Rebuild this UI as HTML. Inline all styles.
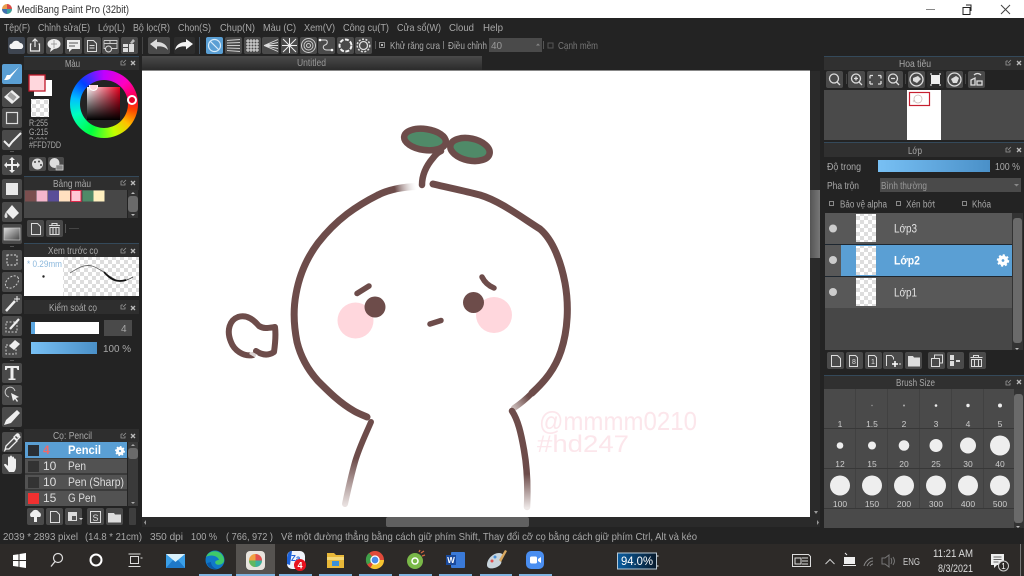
<!DOCTYPE html>
<html><head><meta charset="utf-8"><title>MediBang Paint Pro</title>
<style>
html,body{margin:0;padding:0;width:1024px;height:576px;overflow:hidden;background:#232323}
svg{position:absolute;left:0;top:0;font-family:"Liberation Sans",sans-serif}
text{fill:#a8a8a8;font-size:10px}
.w{position:absolute;left:70px;top:70px;width:68px;height:68px;border-radius:50%;background:conic-gradient(from 0deg,#c000ff 0deg,#ff00c0 45deg,#ff0040 80deg,#ff4000 100deg,#ffc000 130deg,#c0ff00 160deg,#00ff40 205deg,#00ffc0 250deg,#00c0ff 280deg,#0040ff 315deg,#c000ff 360deg)}
.wi{position:absolute;left:80px;top:80px;width:48px;height:48px;border-radius:50%;background:#232323}
.sq{position:absolute;left:87px;top:87px;width:33px;height:33px;background:linear-gradient(to bottom,transparent,#000),linear-gradient(to right,#fff,#e8001f)}
.h{position:absolute;left:127px;top:95px;width:6px;height:6px;border-radius:50%;background:#e8002a;border:2px solid #fff}
.p{position:absolute;left:89px;top:85px;width:7px;height:5px;border-radius:0 0 5px 5px;background:#ffd7dd;border:1px solid #fff;border-top:0}
</style></head><body>
<svg width="1024" height="576" viewBox="0 0 1024 576" xmlns="http://www.w3.org/2000/svg">
<defs>
<pattern id="ck" width="8" height="8" patternUnits="userSpaceOnUse"><rect width="8" height="8" fill="#fff"/><rect width="4" height="4" fill="#ddd"/><rect x="4" y="4" width="4" height="4" fill="#ddd"/></pattern>
<linearGradient id="tab" x1="0" y1="0" x2="0" y2="1"><stop offset="0" stop-color="#4a4a4a"/><stop offset="1" stop-color="#2b2b2b"/></linearGradient>
<linearGradient id="blue" x1="0" y1="0" x2="1" y2="0"><stop offset="0" stop-color="#78c0f4"/><stop offset="1" stop-color="#4a90c8"/></linearGradient>
<linearGradient id="gr" x1="0" y1="0" x2="1" y2="1"><stop offset="0" stop-color="#ddd"/><stop offset="1" stop-color="#444"/></linearGradient>
<linearGradient id="nn" x1="0" y1="0" x2="1" y2="0"><stop offset="0" stop-color="#0a5da0"/><stop offset="1" stop-color="#081a2c"/></linearGradient>
<linearGradient id="scr" x1="0" y1="0" x2="1" y2="0"><stop offset="0" stop-color="#555"/><stop offset="1" stop-color="#777"/></linearGradient>
<linearGradient id="f1" gradientUnits="userSpaceOnUse" x1="416" y1="186" x2="395" y2="190"><stop offset="0" stop-color="#fff" stop-opacity=".3"/><stop offset="1" stop-color="#6d4c4a"/></linearGradient>
<linearGradient id="f2" gradientUnits="userSpaceOnUse" x1="513" y1="407" x2="528" y2="396"><stop offset="0" stop-color="#c9b9b7"/><stop offset="1" stop-color="#6d4c4a"/></linearGradient>
<linearGradient id="f3" gradientUnits="userSpaceOnUse" x1="0" y1="420" x2="0" y2="505"><stop offset=".45" stop-color="#6d4c4a"/><stop offset="1" stop-color="#e8e0df"/></linearGradient>
<linearGradient id="f4" gradientUnits="userSpaceOnUse" x1="0" y1="440" x2="0" y2="508"><stop offset=".5" stop-color="#6d4c4a"/><stop offset="1" stop-color="#eee8e7"/></linearGradient>
<rect id="b" width="17" height="17" rx="2" fill="#4a4a4a"/>
<rect id="t" width="20" height="20" rx="2" fill="#4a4a4a"/>
<g id="x"><path d="M0 0l4 4M4 0l-4 4" stroke="#bbb" stroke-width="1.300"/></g>
<g id="pin"><path d="M0 1h2M0 1v4h4v-2M2 3l3-3" stroke="#999" fill="none" stroke-width=".8"/></g>
<g id="gear"><circle r="3.200" fill="none" stroke="#fff" stroke-width="3.600"/><circle r="5.300" fill="none" stroke="#fff" stroke-width="1.800" stroke-dasharray="2.100 2"/></g>
</defs>

<!-- chrome -->
<rect width="1024" height="576" fill="#232323"/>
<rect width="1024" height="18" fill="#fff"/>
<circle cx="7" cy="9" r="5" fill="#e8a050"/><path d="M7 9V4a5 5 0 0 1 5 5z" fill="#d84a4a"/><path d="M7 9h5a5 5 0 0 1-5 5z" fill="#3aa0a0"/><path d="M7 9v5a5 5 0 0 1-5-5z" fill="#3f6fb0"/>
<text x="17" y="13" style="fill:#333;font-size:11px" textLength="112" lengthAdjust="spacingAndGlyphs">MediBang Paint Pro (32bit)</text>
<path d="M926 9.500h9" stroke="#888"/>
<path d="M963 7.500h7v7h-7zM966 5h5v6" fill="none" stroke="#222"/>
<path d="M1001 5l9 9M1010 5l-9 9" stroke="#444" stroke-width="1"/>

<!-- menu -->
<g>
<text x="4" y="31" style="font-size:10.500px" textLength="26" lengthAdjust="spacingAndGlyphs">Tệp(F)</text>
<text x="38" y="31" style="font-size:10.500px" textLength="52" lengthAdjust="spacingAndGlyphs">Chỉnh sửa(E)</text>
<text x="98" y="31" style="font-size:10.500px" textLength="27" lengthAdjust="spacingAndGlyphs">Lớp(L)</text>
<text x="133" y="31" style="font-size:10.500px" textLength="37" lengthAdjust="spacingAndGlyphs">Bộ lọc(R)</text>
<text x="178" y="31" style="font-size:10.500px" textLength="33" lengthAdjust="spacingAndGlyphs">Chọn(S)</text>
<text x="220" y="31" style="font-size:10.500px" textLength="35" lengthAdjust="spacingAndGlyphs">Chụp(N)</text>
<text x="263" y="31" style="font-size:10.500px" textLength="33" lengthAdjust="spacingAndGlyphs">Màu (C)</text>
<text x="304" y="31" style="font-size:10.500px" textLength="31" lengthAdjust="spacingAndGlyphs">Xem(V)</text>
<text x="343" y="31" style="font-size:10.500px" textLength="46" lengthAdjust="spacingAndGlyphs">Công cụ(T)</text>
<text x="397" y="31" style="font-size:10.500px" textLength="44" lengthAdjust="spacingAndGlyphs">Cửa sổ(W)</text>
<text x="449" y="31" style="font-size:10.500px" textLength="25" lengthAdjust="spacingAndGlyphs">Cloud</text>
<text x="483" y="31" style="font-size:10.500px" textLength="20" lengthAdjust="spacingAndGlyphs">Help</text>
</g>

<!-- toolbar -->
<rect x="8" y="37" width="17" height="17" rx="2" fill="#3e4550"/>
<path d="M11.500 49a2.800 2.800 0 0 1 .5-5.500 4.500 4.500 0 0 1 8-.5 3.200 3.200 0 0 1 1.500 6z" fill="#f4f4f4"/>
<use href="#b" x="27" y="37"/><use href="#b" x="46" y="37"/><use href="#b" x="65" y="37"/><use href="#b" x="84" y="37"/><use href="#b" x="102" y="37"/><use href="#b" x="121" y="37"/>
<path d="M31.500 44h-1v7h9v-7h-1M35 47v-8M32.500 41.500L35 39l2.500 2.500" fill="none" stroke="#eee" stroke-width="1.200"/>
<ellipse cx="54" cy="44" rx="6.500" ry="5" fill="#eee"/><path d="M51 48l-1 4 4-3z" fill="#eee"/><path d="M51 44h6M54 40v8" stroke="#888" stroke-width=".7"/>
<path d="M67 40h13v9h-8l-3 3v-3h-2z" fill="#eee"/><path d="M69 43h9M69 46h6" stroke="#555"/>
<path d="M87.500 40.500h6l3 3v8h-9zM89.500 45.500h5M89.500 48h5" fill="none" stroke="#ddd"/>
<path d="M104 40.500h13v8h-5M104 40.500v8h2M104 43.500h13M110 40.500v3" fill="none" stroke="#ccc" stroke-width=".9"/><circle cx="108.500" cy="49" r="3" fill="none" stroke="#ddd"/>
<path d="M123 44h5v3h-5zM123 48h5v4h-5zM129 44h5v8h-5z" fill="#ddd"/><path d="M133 39l2 2-3 3-2-1z" fill="#bbb"/>
<rect x="148" y="37" width="22" height="17" rx="2" fill="#4a4a4a"/><rect x="174" y="37" width="21" height="17" rx="2" fill="#2d2d2d"/>
<path d="M150 44l7-5v3c6 0 10 3 11 8-3-3-6-4-11-3.500v3z" fill="#ddd"/>
<path d="M193 44l-7-5v3c-6 0-10 3-11 8 3-3 6-4 11-3.500v3z" fill="#f4f4f4"/>
<rect x="142" y="37" width="1" height="17" fill="#444"/><rect x="199" y="37" width="1" height="17" fill="#456"/>
<rect x="206" y="37" width="17" height="17" rx="2" fill="#5a9fd4"/>
<circle cx="214.500" cy="45.500" r="6" fill="none" stroke="#d8ecfa" stroke-width="1.200"/><path d="M210.500 41.500l8 8" stroke="#d8ecfa" stroke-width="1.200"/>
<use href="#b" x="225" y="37"/><use href="#b" x="244" y="37"/><use href="#b" x="262" y="37"/><use href="#b" x="281" y="37"/><use href="#b" x="300" y="37"/><use href="#b" x="318" y="37"/><use href="#b" x="337" y="37"/><use href="#b" x="355" y="37"/>
<path d="M227 40.500l13-1M227 43l13-.5M227 45.500h13M227 48l13 .5M227 50.500l13 1" stroke="#ccc"/>
<path d="M246 41h13M246 44h13M246 47h13M246 50h13M248 39v13M251 39v13M254 39v13M257 39v13" stroke="#e4e4e4"/>
<path d="M264 45.500l14-6M264 45.500l14-3M264 45.500h14M264 45.500l14 3M264 45.500l14 6" stroke="#ddd" stroke-width=".9"/>
<path d="M283 39l13 13M296 39l-13 13M289.500 38v15M282 45.500h15" stroke="#eee" stroke-width="1"/>
<circle cx="308.500" cy="45.500" r="7" fill="none" stroke="#ccc"/><circle cx="308.500" cy="45.500" r="4.500" fill="none" stroke="#ccc"/><circle cx="308.500" cy="45.500" r="2" fill="none" stroke="#ccc"/>
<path d="M320 40h5c3 0 3 4 0 5-3 1-2 5 2 5h6" fill="none" stroke="#ddd"/><circle cx="320" cy="40" r="1.300" fill="#fff"/><circle cx="332" cy="50" r="1.300" fill="#fff"/>
<circle cx="345.500" cy="45.500" r="6" fill="none" stroke="#f2f2f2" stroke-width="2" stroke-dasharray="4 1.500"/>
<circle cx="363.500" cy="45.500" r="4" fill="none" stroke="#ddd" stroke-width="1.300"/><circle cx="363.500" cy="45.500" r="6.300" fill="none" stroke="#ddd" stroke-width="1.500" stroke-dasharray="2 1.500"/>
<rect x="375" y="41" width="1" height="8" fill="#555"/>
<rect x="379.500" y="42.500" width="5" height="5" fill="none" stroke="#888"/><rect x="381" y="44" width="2" height="2" fill="#bbb"/>
<text x="390" y="49" style="font-size:10.500px" textLength="50" lengthAdjust="spacingAndGlyphs">Khử răng cưa</text>
<rect x="443" y="41" width="1" height="8" fill="#777"/>
<text x="448" y="49" style="font-size:10.500px" textLength="39" lengthAdjust="spacingAndGlyphs">Điều chỉnh</text>
<rect x="489" y="38" width="53" height="14" fill="#4a4a4a"/><text x="491" y="49" style="fill:#999">40</text>
<path d="M536 45.500l2-2 2 2" fill="#888"/>
<rect x="543" y="41" width="1" height="8" fill="#555"/>
<rect x="548" y="43" width="5" height="5" fill="none" stroke="#555"/>
<text x="558" y="49" textLength="40" lengthAdjust="spacingAndGlyphs" style="fill:#777;font-size:10.500px">Cạnh mềm</text>

<!-- canvas tab -->
<rect x="142" y="56" width="340" height="14" fill="url(#tab)"/>
<rect x="142" y="70" width="668" height="1" fill="#888"/>
<text x="297" y="66" style="font-size:10px;fill:#999" textLength="29" lengthAdjust="spacingAndGlyphs">Untitled</text>
<rect x="142" y="71" width="668" height="446" fill="#fff"/>
<!-- canvas scrollbars -->
<rect x="810" y="71" width="10" height="446" fill="#2a2a2a"/>
<rect x="810" y="190" width="10" height="68" fill="url(#scr)"/>
<rect x="142" y="517" width="678" height="10" fill="#2a2a2a"/>
<rect x="386" y="517" width="143" height="10" rx="2" fill="#606060"/>
<path d="M146 520v5l-2-2.500z" fill="#999"/><path d="M814 511h4l-2 3zM817 520v5l2-2.500z" fill="#999"/>

<!-- drawing -->
<circle cx="355.500" cy="320.500" r="18" fill="#ffd7dd"/>
<circle cx="494" cy="315" r="18" fill="#ffd7dd"/>
<g fill="none" stroke="#6d4c4a" stroke-width="7" stroke-linecap="round" stroke-linejoin="round">
<path d="M417 186.500C400 187 388 190 378 195" stroke="url(#f1)"/>
<path d="M378 195C366 201 355 208 347 214 334 224 325 234 318 243 306 259 299 277 296 294 293 310 294 327 297 342 301 358 309 371 318 381 329 392 340 403 354 411 359 414 363 415 367 417"/>
<path d="M433 184C450 188 465 191 480 195 500 201 521 217 540 229 553 240 561 262 565 283 569 305 568 330 561 351 555 369 545 381 532 393"/>
<path d="M532 393C526 399 520 404 514 408" stroke="url(#f2)" stroke-width="6"/>
<path d="M371 422C365 436 359 448 355 462 351 476 348 490 345 504" stroke="url(#f3)" stroke-width="6"/>
<path d="M512 411C518 420 521 433 524 450 527 467 528 486 527 507" stroke="url(#f4)" stroke-width="6.500"/>
<ellipse cx="425" cy="139.500" rx="21" ry="10.500" transform="rotate(8 425 139.500)" fill="#4f8a68" stroke-width="6.500"/>
<ellipse cx="470" cy="149.500" rx="20" ry="11" transform="rotate(12 470 149.500)" fill="#4f8a68" stroke-width="6.500"/>
<path d="M422 185C422 174 427 165 433 158 436 154 438 152 441 151" stroke-width="6.500"/>
<path d="M357 293.500L369 286" stroke-width="5.500"/>
<path d="M482 277C485 283 489 286 494 288" stroke-width="5.500"/>
<path d="M430 324L441 320.500" stroke-width="5.500"/>
<path d="M253 355C243 357 234 350 231 342 226 330 230 320 238 317 247 314 254 320 259 326 264 329 268 328 275 327 276 335 275 345 274 352 268 356 262 355 256 351" stroke-width="6"/>
</g>
<path d="M250 352.500l7 4" stroke="#fff" stroke-width="3.500" opacity=".75"/>
<circle cx="375" cy="307" r="10.500" fill="#6d4c4a"/>
<circle cx="473.500" cy="302.500" r="10.500" fill="#6d4c4a"/>
<text x="539" y="430" textLength="158" lengthAdjust="spacingAndGlyphs" style="fill:#fbdde4;fill-opacity:.75;font-size:26px">@mmmm0210</text>
<text x="537" y="452" textLength="92" lengthAdjust="spacingAndGlyphs" style="fill:#fbdde4;fill-opacity:.75;font-size:24px">#hd247</text>

<!-- left tool strip -->
<rect x="2" y="64" width="20" height="20" rx="2" fill="#5a9fd4"/>
<path d="M19 67L10 75l-3 0c-1 1-1 3-3 5 3 0 6 0 7-3z" fill="#fff"/>
<use href="#t" x="2" y="87"/><path d="M12 90l8 7-8 7-8-7z" fill="#eee"/><path d="M9 94l6 5" stroke="#555" stroke-width="5" opacity=".5"/>
<use href="#t" x="2" y="108"/><rect x="6.500" y="112.500" width="11" height="11" fill="none" stroke="#ddd" stroke-width="1.200"/>
<use href="#t" x="2" y="130"/><path d="M4 141l5 5 3-4 9-9" fill="none" stroke="#eee" stroke-width="2"/>
<rect x="10" y="151" width="4" height="1" fill="#555"/>
<use href="#t" x="2" y="155"/><path d="M12 157l3 3h-2v4h4v-2l3 3-3 3v-2h-4v4h2l-3 3-3-3h2v-4H7v2l-3-3 3-3v2h4v-4H9z" fill="#eee"/>
<use href="#t" x="2" y="179"/><rect x="6" y="183" width="12" height="12" fill="#e8e8e8"/>
<use href="#t" x="2" y="202"/><path d="M12 205l7 8-6 6-7-7z" fill="#eee"/><path d="M6 212c-2 3-2 6 0 6s2-3 0-6z" fill="#ddd"/>
<use href="#t" x="2" y="224"/><rect x="4" y="228" width="16" height="12" fill="url(#gr)" stroke="#ccc" stroke-width=".7"/>
<rect x="10" y="246" width="4" height="1" fill="#555"/>
<use href="#t" x="2" y="250"/><rect x="7" y="255" width="10" height="10" fill="none" stroke="#ddd" stroke-dasharray="2 1.500"/>
<use href="#t" x="2" y="272"/><ellipse cx="12" cy="282" rx="7.500" ry="5" transform="rotate(-40 12 282)" fill="none" stroke="#ccc" stroke-dasharray="2 1.500"/>
<use href="#t" x="2" y="294"/><path d="M6 311l9-10" stroke="#eee" stroke-width="2.500"/><path d="M17 296v6M14 299h6" stroke="#eee"/>
<use href="#t" x="2" y="316"/><rect x="6" y="322" width="11" height="10" fill="none" stroke="#ccc" stroke-dasharray="2 1.500"/><path d="M10 329l9-10" stroke="#eee" stroke-width="2.200"/>
<use href="#t" x="2" y="338"/><rect x="6" y="345" width="10" height="9" fill="none" stroke="#ccc" stroke-dasharray="2 1.500"/><path d="M15 340l5 4-6 6-5-4z" fill="#eee"/>
<rect x="10" y="360" width="4" height="1" fill="#555"/>
<use href="#t" x="2" y="363"/><path d="M5 366h14v4h-1.500l-1-2H13.500v10.500h2v1.500h-7v-1.500h2V368H7.500l-1 2H5z" fill="#eee"/>
<use href="#t" x="2" y="385"/><path d="M9 397a5 5 0 1 1 6-6" fill="none" stroke="#ccc"/><path d="M11 393l8 4-3 1 2 3-1 1-2-3-2 2z" fill="#eee"/>
<use href="#t" x="2" y="407"/><path d="M17 410l3 3-9 10-7 2 2-5z" fill="#eee"/>
<rect x="10" y="429" width="4" height="1" fill="#555"/>
<use href="#t" x="2" y="432"/><path d="M6 449l-1 1 1-4 8-8 3 3-8 8zM14 437l3-3 3 3-3 3z" fill="none" stroke="#eee" stroke-width="1.300"/><path d="M15 435l3-2 2 2-2 3z" fill="#eee"/>
<use href="#t" x="2" y="454"/><path d="M9 472c-2-3-4-5-5-7 0-1 1-2 3 0l1 1v-8c0-2 2-2 2 0v-1c0-2 2-2 2 0v1c0-2 2-2 2 0v1c0-1 2-1 2 1v7c0 2-1 4-2 5z" fill="#eee"/>

<!-- panel headers shading -->
<rect x="24" y="57" width="115" height="13" fill="#2e2e2e"/>
<rect x="24" y="177" width="115" height="13" fill="#2e2e2e"/>
<rect x="24" y="244" width="115" height="13" fill="#2e2e2e"/>
<rect x="24" y="300" width="115" height="14" fill="#2e2e2e"/>

<!-- color panel -->
<rect x="24" y="56" width="115" height="1" fill="#34495a"/>
<text x="65" y="67" style="font-size:10.500px" textLength="15" lengthAdjust="spacingAndGlyphs">Màu</text>
<use href="#pin" x="121" y="60"/><use href="#x" x="131" y="61"/>
<rect x="34" y="80" width="18" height="16" fill="#fff"/>
<rect x="29" y="75" width="16" height="16" fill="#ffd7dd" stroke="#c0182a" stroke-width="1.300"/>
<rect x="31" y="99" width="18" height="18" fill="url(#ck)"/>
<text x="29" y="126" style="font-size:9px" textLength="19" lengthAdjust="spacingAndGlyphs">R:255</text>
<text x="29" y="135" style="font-size:9px" textLength="19" lengthAdjust="spacingAndGlyphs">G:215</text>
<text x="29" y="144" style="font-size:9px" textLength="19" lengthAdjust="spacingAndGlyphs">B:221</text>
<rect x="26" y="139.500" width="36" height="10" fill="#232323"/>
<text x="29" y="148" style="font-size:9px" textLength="32" lengthAdjust="spacingAndGlyphs">#FFD7DD</text>
<rect x="29" y="157" width="17" height="14" rx="2" fill="#4a4a4a"/><rect x="48" y="157" width="16" height="14" rx="2" fill="#4a4a4a"/>
<circle cx="37.500" cy="164" r="5.500" fill="#ddd"/><circle cx="35" cy="162" r="1" fill="#444"/><circle cx="39" cy="161.500" r="1" fill="#444"/><circle cx="41" cy="165" r="1" fill="#444"/>
<circle cx="54.500" cy="163" r="5" fill="#ddd"/><rect x="56" y="165" width="7" height="5" fill="#888" stroke="#ddd" stroke-width=".6"/>

<!-- palette -->
<rect x="24" y="176" width="115" height="1" fill="#34495a"/>
<text x="53" y="187" style="font-size:10.500px" textLength="38" lengthAdjust="spacingAndGlyphs">Bảng màu</text>
<use href="#pin" x="121" y="180"/><use href="#x" x="131" y="181"/>
<rect x="24" y="190" width="103" height="28" fill="#474747"/>
<rect x="25" y="190.500" width="11" height="11" fill="#7a4e4e"/><rect x="36.500" y="190.500" width="11" height="11" fill="#f5b6cc"/><rect x="48" y="190.500" width="11" height="11" fill="#5a4e98"/><rect x="59" y="190.500" width="11" height="11" fill="#ffe0c0"/>
<rect x="71" y="190.500" width="10" height="11" fill="#ffc6d4" stroke="#e0284a"/>
<rect x="82.500" y="190.500" width="11" height="11" fill="#4f8a68"/><rect x="93.500" y="190.500" width="11" height="11" fill="#fff0c0"/>
<rect x="128" y="190" width="10" height="28" fill="#333"/><rect x="128" y="196" width="10" height="16" rx="3" fill="#6a6a6a"/>
<path d="M131 194l2-2 2 2zM131 214l2 2 2-2z" fill="#bbb"/>
<use href="#b" x="27" y="220"/><use href="#b" x="46" y="220"/>
<path d="M31.500 223.500h6l3 3v8h-9z" fill="none" stroke="#ddd"/>
<path d="M49 225.500h11M50 227.500h9v7h-9zM53 227.500v7M56 227.500v7M52 225.500v-2h5v2" fill="none" stroke="#ddd" stroke-width="1.100"/>
<rect x="65" y="224" width="1" height="9" fill="#555"/><rect x="69" y="228" width="10" height="1" fill="#444"/>

<!-- preview -->
<rect x="24" y="243" width="115" height="1" fill="#34495a"/>
<text x="48" y="254" style="font-size:10.500px" textLength="50" lengthAdjust="spacingAndGlyphs">Xem trước cọ</text>
<use href="#pin" x="121" y="248"/><use href="#x" x="131" y="249"/>
<rect x="63" y="257" width="76" height="39" fill="url(#ck)"/>
<rect x="24" y="257" width="39" height="39" fill="#fff"/>
<text x="27" y="267" style="fill:#8cb8dc;font-size:9.500px" textLength="35" lengthAdjust="spacingAndGlyphs">* 0.29mm</text>
<circle cx="43.500" cy="276.500" r="1.200" fill="#222"/>
<path d="M70 273C78 268 84 264 92 266 96 267 100 270 104 272" fill="none" stroke="#666" stroke-width=".9"/>
<path d="M104 272C108 276 112 278 116 280 122 282 126 281 133 277" fill="none" stroke="#444" stroke-width=".9"/>
<path d="M104 272C110 279 116 283 126 280" fill="none" stroke="#111" stroke-width="1.700"/>

<!-- brush control -->
<text x="49" y="311" style="font-size:10.500px" textLength="48" lengthAdjust="spacingAndGlyphs">Kiểm soát cọ</text>
<use href="#pin" x="121" y="304"/><use href="#x" x="131" y="306"/>
<rect x="31" y="322" width="68" height="12" fill="#fff"/><rect x="31" y="322" width="4" height="12" fill="#5aa6e0"/>
<rect x="104" y="320" width="28" height="16" fill="#4a4a4a"/><text x="121" y="332" style="font-size:10px">4</text>
<rect x="31" y="342" width="66" height="12" fill="url(#blue)"/>
<text x="103" y="352" style="font-size:10.500px" textLength="28" lengthAdjust="spacingAndGlyphs">100 %</text>

<!-- brush list -->
<rect x="24" y="429" width="115" height="13" fill="#2e2e2e"/>
<text x="53" y="439" style="font-size:10.500px" textLength="39" lengthAdjust="spacingAndGlyphs">Cọ: Pencil</text>
<use href="#pin" x="121" y="433"/><use href="#x" x="131" y="434"/>
<rect x="25" y="442" width="102" height="16" fill="#5a9fd4"/>
<rect x="25" y="458.500" width="102" height="15" fill="#525252"/>
<rect x="25" y="474.500" width="102" height="15" fill="#525252"/>
<rect x="25" y="490.500" width="102" height="15.500" fill="#525252"/>
<rect x="28" y="445" width="11" height="11" fill="#2a2f35"/>
<rect x="28" y="461" width="11" height="11" fill="#333"/>
<rect x="28" y="477" width="11" height="11" fill="#333"/>
<rect x="28" y="493" width="11" height="11" fill="#f03030"/>
<text x="43" y="454" style="fill:#ef6a6a;font-weight:bold;font-size:12px">4</text>
<text x="68" y="454" style="fill:#fff;font-weight:bold;font-size:12px" textLength="33" lengthAdjust="spacingAndGlyphs">Pencil</text>
<text x="43" y="470" style="fill:#ddd;font-size:12px">10</text><text x="68" y="470" style="fill:#ddd;font-size:12px" textLength="18" lengthAdjust="spacingAndGlyphs">Pen</text>
<text x="43" y="486" style="fill:#ddd;font-size:12px">10</text><text x="68" y="486" style="fill:#ddd;font-size:12px" textLength="56" lengthAdjust="spacingAndGlyphs">Pen (Sharp)</text>
<text x="43" y="502" style="fill:#ddd;font-size:12px">15</text><text x="68" y="502" style="fill:#ddd;font-size:12px" textLength="28" lengthAdjust="spacingAndGlyphs">G Pen</text>
<use href="#gear" x="120" y="451" transform="translate(24 90.200) scale(.8)"/>
<rect x="128" y="442" width="10" height="64" fill="#3a3a3a"/><rect x="128" y="448" width="10" height="11" rx="3" fill="#6a6a6a"/>
<path d="M131 446l2-2 2 2zM131 502l2 2 2-2z" fill="#aaa"/>
<use href="#b" x="27" y="508"/><use href="#b" x="46" y="508"/><use href="#b" x="65" y="508"/><use href="#b" x="87" y="508"/><use href="#b" x="106" y="508"/>
<rect x="129" y="508" width="7" height="17" rx="1" fill="#3e3e3e"/>
<path d="M31 517a3 3 0 0 1 1-5 4 4 0 0 1 7 0 3 3 0 0 1 1 5h-3v5h-3v-5z" fill="#eee"/>
<path d="M50.500 511.500h6l3 3v8h-9z" fill="none" stroke="#ddd"/>
<rect x="68" y="512" width="9" height="9" fill="#ddd"/><rect x="72" y="516" width="4" height="4" fill="#555"/><path d="M79 518h4l-2 2z" fill="#ddd"/>
<rect x="90.500" y="511.500" width="10" height="11" fill="none" stroke="#ddd"/><text x="92.500" y="521" style="fill:#ddd;font-size:9px">S</text>
<path d="M108 513h6l1 1.500h6v8h-13z" fill="#ddd"/>

<!-- status bar -->
<g>
<text x="3" y="540" style="font-size:10.500px" textLength="75" lengthAdjust="spacingAndGlyphs">2039 * 2893 pixel</text>
<text x="85" y="540" style="font-size:10.500px" textLength="57" lengthAdjust="spacingAndGlyphs">(14.8 * 21cm)</text>
<text x="150" y="540" style="font-size:10.500px" textLength="33" lengthAdjust="spacingAndGlyphs">350 dpi</text>
<text x="191" y="540" style="font-size:10.500px" textLength="26" lengthAdjust="spacingAndGlyphs">100 %</text>
<text x="226" y="540" style="font-size:10.500px" textLength="47" lengthAdjust="spacingAndGlyphs">( 766, 972 )</text>
<text x="281" y="540" style="font-size:10.500px" textLength="416" lengthAdjust="spacingAndGlyphs">Vẽ một đường thẳng bằng cách giữ phím Shift, Thay đổi cỡ cọ bằng cách giữ phím Ctrl, Alt và kéo</text>
</g>

<!-- navigator -->
<rect x="824" y="56" width="200" height="1" fill="#34495a"/>
<rect x="824" y="57" width="200" height="13" fill="#303030"/>
<text x="899" y="67" style="font-size:10.500px" textLength="32" lengthAdjust="spacingAndGlyphs">Hoa tiêu</text>
<use href="#pin" x="1006" y="60"/><use href="#x" x="1017" y="61"/>
<g>
<use href="#b" x="826" y="71"/><use href="#b" x="848" y="71"/><use href="#b" x="867" y="71"/><use href="#b" x="886" y="71"/><use href="#b" x="908" y="71"/><rect x="927" y="71" width="17" height="17" rx="2" fill="#2c2c2c"/><use href="#b" x="946" y="71"/><use href="#b" x="968" y="71"/>
</g>
<g fill="none" stroke="#ddd" stroke-width="1.300">
<circle cx="834" cy="78.500" r="4.500"/><path d="M837 82l3 3"/>
<circle cx="856" cy="78.500" r="4.500"/><path d="M859 82l3 3M854 78.500h4M856 76.500v4"/>
<path d="M870 75.500h3M870 75.500v3M881 75.500h-3M881 75.500v3M870 84h3M870 84v-3M881 84h-3M881 84v-3"/>
<circle cx="893" cy="78.500" r="4.500"/><path d="M896 82l3 3M891 78.500h4"/>
<circle cx="916.500" cy="79.500" r="6.500"/>
<circle cx="954.500" cy="79.500" r="6.500"/>
<path d="M971 85v-5l4-2v7zM977 81h5v4h-5zM974 75c2-2 5-2 7 0"/>
</g>
<path d="M913 78l5-2 3 3-4 4-4-2z" fill="#ddd"/><path d="M951 79l5-3 3 2-2 5-4 0z" fill="#ddd"/>
<rect x="931" y="75" width="9" height="9" fill="#eee"/><path d="M930 74h2M939 74h2M930 85h2M939 85h2" stroke="#fff"/>
<rect x="905" y="74" width="1" height="10" fill="#444"/><rect x="846" y="74" width="1" height="10" fill="#444"/><rect x="965" y="74" width="1" height="10" fill="#444"/>
<rect x="824" y="90" width="200" height="50" fill="#4a4a4a"/>
<rect x="907" y="90" width="34" height="50" fill="#fff"/>
<rect x="909.500" y="92.500" width="20" height="13" fill="none" stroke="#c62030" stroke-width="1.200"/>
<circle cx="918" cy="99" r="4" fill="none" stroke="#c9b4b2" stroke-width=".7"/><circle cx="914" cy="101" r="1" fill="none" stroke="#c9b4b2" stroke-width=".5"/>

<!-- layer panel -->
<rect x="824" y="142" width="200" height="1" fill="#34495a"/>
<rect x="824" y="143" width="200" height="14" fill="#303030"/>
<text x="908" y="154" style="font-size:10.500px" textLength="14" lengthAdjust="spacingAndGlyphs">Lớp</text>
<use href="#pin" x="1006" y="147"/><use href="#x" x="1017" y="148"/>
<text x="827" y="170" style="font-size:10.500px" textLength="34" lengthAdjust="spacingAndGlyphs">Độ trong</text>
<rect x="878" y="160" width="112" height="12" fill="url(#blue)"/>
<text x="995" y="170" style="font-size:10px" textLength="25" lengthAdjust="spacingAndGlyphs">100 %</text>
<text x="827" y="189" style="font-size:10.500px" textLength="32" lengthAdjust="spacingAndGlyphs">Pha trộn</text>
<rect x="880" y="178" width="141" height="14" fill="#4a4a4a"/>
<text x="881" y="189" style="font-size:10.500px;fill:#999" textLength="46" lengthAdjust="spacingAndGlyphs">Bình thường</text>
<path d="M1014 184h5l-2.500 2.500z" fill="#888"/>
<g fill="none" stroke="#888"><rect x="829.500" y="201.500" width="4" height="4"/><rect x="896.500" y="201.500" width="4" height="4"/><rect x="962.500" y="201.500" width="4" height="4"/></g>
<text x="840" y="207.500" style="font-size:10px" textLength="47" lengthAdjust="spacingAndGlyphs">Bảo vệ alpha</text>
<text x="906" y="207.500" style="font-size:10px" textLength="29" lengthAdjust="spacingAndGlyphs">Xén bớt</text>
<text x="972" y="207.500" style="font-size:10px" textLength="19" lengthAdjust="spacingAndGlyphs">Khóa</text>
<rect x="825" y="213" width="187" height="137" fill="#474747"/>
<rect x="825" y="213" width="187" height="31" fill="#585858"/>
<rect x="825" y="245" width="187" height="31" fill="#585858"/>
<rect x="841" y="245" width="171" height="31" fill="#5a9fd4"/>
<rect x="825" y="277" width="187" height="31" fill="#585858"/>
<rect x="825" y="244" width="187" height="1" fill="#1e2730"/><rect x="825" y="276" width="187" height="1" fill="#1e2730"/>
<rect x="856" y="214" width="20" height="28" fill="url(#ck)"/><rect x="856" y="246" width="20" height="29" fill="url(#ck)"/><rect x="856" y="278" width="20" height="28" fill="url(#ck)"/>
<circle cx="833" cy="228.500" r="4" fill="#ccc"/><circle cx="833" cy="260" r="4" fill="#ccc"/><circle cx="833" cy="292" r="4" fill="#ccc"/>
<text x="894" y="232.500" style="fill:#e4e4e4;font-size:12px" textLength="23" lengthAdjust="spacingAndGlyphs">Lớp3</text>
<text x="894" y="264.500" style="fill:#fff;font-weight:bold;font-size:12px" textLength="26" lengthAdjust="spacingAndGlyphs">Lớp2</text>
<text x="894" y="296.500" style="fill:#e4e4e4;font-size:12px" textLength="23" lengthAdjust="spacingAndGlyphs">Lớp1</text>
<use href="#gear" x="1003" y="260.500"/>
<rect x="1012" y="213" width="11" height="137" fill="#333"/><rect x="1013" y="218" width="9" height="125" rx="3" fill="#6a6a6a"/><path d="M1015 348l2 2 2-2z" fill="#bbb"/>
<use href="#b" x="827" y="352"/><use href="#b" x="846" y="352"/><use href="#b" x="865" y="352"/><rect x="883" y="352" width="20" height="17" rx="2" fill="#4a4a4a"/><use href="#b" x="905" y="352"/><use href="#b" x="928" y="352"/><use href="#b" x="947" y="352"/><use href="#b" x="969" y="352"/>
<g fill="none" stroke="#ddd">
<path d="M831.500 355.500h6l3 3v8h-9z"/>
<path d="M849.500 355.500h6l2 2v9h-8z"/>
<path d="M868.500 355.500h6l2 2v9h-8z"/>
<path d="M886.500 366v-10.500h5l2 2v2"/>
<rect x="931.500" y="358.500" width="8" height="8"/><path d="M934.500 358v-3h8v8h-3"/>
<path d="M970.500 357.500h12M971.500 359.500h10v7h-10zM974.500 360v6M978.500 360v6"/>
<path d="M973.500 357.500v-2h5v2"/>
</g>
<text x="852" y="364" style="fill:#ddd;font-size:7px">8</text><text x="871" y="364" style="fill:#ddd;font-size:7px">1</text>
<path d="M892 364h6M895 361v6" stroke="#fff" stroke-width="1.500"/><path d="M899 364h2" stroke="#ddd"/>
<path d="M908 356h5l1 1.500h6v9h-12z" fill="#ddd"/>
<path d="M950 355h4v5h-4zM950 361h4v5h-4zM956 360h4v2h-4z" fill="#ddd"/>

<!-- brush size panel -->
<rect x="824" y="375" width="200" height="1" fill="#34495a"/>
<rect x="824" y="376" width="200" height="13" fill="#303030"/>
<text x="896" y="386" style="font-size:10px" textLength="39" lengthAdjust="spacingAndGlyphs">Brush Size</text>
<use href="#pin" x="1006" y="380"/><use href="#x" x="1017" y="380"/>
<rect x="824" y="389" width="190" height="139" fill="#4a4a4a"/>
<g fill="#383838"><rect x="824" y="428" width="190" height="1"/><rect x="824" y="468" width="190" height="1"/><rect x="824" y="508" width="190" height="1"/>
<rect x="855" y="389" width="1" height="119" opacity=".5"/><rect x="887" y="389" width="1" height="119" opacity=".5"/><rect x="919" y="389" width="1" height="119" opacity=".5"/><rect x="951" y="389" width="1" height="119" opacity=".5"/><rect x="983" y="389" width="1" height="119" opacity=".5"/></g>
<g fill="#eee">
<circle cx="872" cy="405.500" r=".7" opacity=".5"/><circle cx="904" cy="405.500" r="1" opacity=".6"/><circle cx="936" cy="405.500" r="1.300"/><circle cx="968" cy="405.500" r="1.700"/><circle cx="1000" cy="405.500" r="2"/>
<circle cx="840" cy="445.500" r="3.300"/><circle cx="872" cy="445.500" r="4"/><circle cx="904" cy="445.500" r="5.300"/><circle cx="936" cy="445.500" r="6.500"/><circle cx="968" cy="445.500" r="8"/><circle cx="1000" cy="445.500" r="10"/>
<circle cx="840" cy="485.500" r="10"/><circle cx="872" cy="485.500" r="10"/><circle cx="904" cy="485.500" r="10"/><circle cx="936" cy="485.500" r="10"/><circle cx="968" cy="485.500" r="10"/><circle cx="1000" cy="485.500" r="10"/>
</g>
<g text-anchor="middle">
<text x="840" y="427" style="fill:#ccc;font-size:8.500px">1</text><text x="872" y="427" style="fill:#ccc;font-size:8.500px">1.5</text><text x="904" y="427" style="fill:#ccc;font-size:8.500px">2</text><text x="936" y="427" style="fill:#ccc;font-size:8.500px">3</text><text x="968" y="427" style="fill:#ccc;font-size:8.500px">4</text><text x="1000" y="427" style="fill:#ccc;font-size:8.500px">5</text>
<text x="840" y="467" style="fill:#ccc;font-size:8.500px">12</text><text x="872" y="467" style="fill:#ccc;font-size:8.500px">15</text><text x="904" y="467" style="fill:#ccc;font-size:8.500px">20</text><text x="936" y="467" style="fill:#ccc;font-size:8.500px">25</text><text x="968" y="467" style="fill:#ccc;font-size:8.500px">30</text><text x="1000" y="467" style="fill:#ccc;font-size:8.500px">40</text>
<text x="840" y="507" style="fill:#ccc;font-size:8.500px">100</text><text x="872" y="507" style="fill:#ccc;font-size:8.500px">150</text><text x="904" y="507" style="fill:#ccc;font-size:8.500px">200</text><text x="936" y="507" style="fill:#ccc;font-size:8.500px">300</text><text x="968" y="507" style="fill:#ccc;font-size:8.500px">400</text><text x="1000" y="507" style="fill:#ccc;font-size:8.500px">500</text>
</g>
<rect x="1014" y="389" width="10" height="139" fill="#333"/><rect x="1014" y="394" width="9" height="129" rx="3" fill="#6a6a6a"/><path d="M1016 526l2 2 2-2z" fill="#bbb"/>

<!-- taskbar -->
<rect y="544" width="1024" height="32" fill="#2d2a28"/>
<rect x="236" y="544" width="39" height="32" fill="#565350"/>
<g fill="#7fb4e0"><rect x="199" y="574" width="33" height="2"/><rect x="236" y="574" width="39" height="2"/><rect x="279" y="574" width="33" height="2"/><rect x="319" y="574" width="33" height="2"/><rect x="359" y="574" width="33" height="2"/><rect x="399" y="574" width="33" height="2"/><rect x="439" y="574" width="33" height="2"/><rect x="480" y="574" width="32" height="2"/><rect x="519" y="574" width="33" height="2"/></g>
<path d="M13 555l5.500-.8V560H13zM19.500 554l6.500-1V560h-6.500zM13 561h5.500v5.800L13 566zM19.500 561H26v7l-6.500-1z" fill="#fff"/>
<circle cx="58" cy="558" r="4.500" fill="none" stroke="#ddd" stroke-width="1.200"/><path d="M55 561.500l-4 5" stroke="#ddd" stroke-width="1.300"/>
<circle cx="96" cy="560" r="5.500" fill="none" stroke="#fff" stroke-width="2"/>
<path d="M130.500 556.500h8v7h-8zM128.500 566.500h12M128.500 554h12" fill="none" stroke="#ddd" stroke-width="1"/><path d="M140.500 558h2" stroke="#ddd"/>
<path d="M166 554h19v14h-19z" fill="#3a9fe8"/><path d="M166 554l9.500 8 9.500-8z" fill="#d8f0fb"/><path d="M166 568l7-8 2.500 2 2.500-2 7 8z" fill="#1e78c8"/>
<circle cx="215" cy="560" r="9.500" fill="#1078c8"/><path d="M206 557c3-8 16-8 18 2 1 5-5 7-8 5-2-2 0-4 3-4-1-4-8-6-13-3z" fill="#3fc86a"/><path d="M207 563c1 4 5 7 10 6-4-1-6-4-6-7z" fill="#0a58a8"/>
<rect x="246" y="551" width="19" height="19" rx="4" fill="#e8e4de"/><circle cx="255.500" cy="560.500" r="6.500" fill="#f0a040"/><path d="M255.500 560.500v-6.500a6.500 6.500 0 0 1 6.500 6.500z" fill="#e25050"/><path d="M255.500 560.500h6.500a6.500 6.500 0 0 1-6.500 6.500z" fill="#3ab0a0"/><path d="M255.500 560.500v6.500a6.500 6.500 0 0 1-6.500-6.500z" fill="#60b860"/>
<rect x="287" y="551" width="18" height="18" rx="5" fill="#f0f4fa"/><path d="M287 558c0-4 2-7 5-7l-2 14-3-1z" fill="#1d62d8"/><text x="291" y="561" style="fill:#1d62d8;font-size:8px;font-weight:bold">Za</text>
<circle cx="300" cy="565" r="6" fill="#e8121e"/><text x="300" y="568.500" text-anchor="middle" style="fill:#fff;font-size:9px;font-weight:bold">4</text>
<path d="M327 553h7l2 2h8v13h-17z" fill="#e8b838"/><rect x="327" y="557" width="17" height="3" fill="#f4d878"/><rect x="332" y="561" width="7" height="5" fill="#3a90d8"/>
<circle cx="375" cy="560" r="9" fill="#e04a3a"/><path d="M375 560l-7.800 4.500A9 9 0 0 1 369 553z" fill="#3fa04a"/><path d="M375 560h9a9 9 0 0 1-13.500 7.800z" fill="#f4c430"/><circle cx="375" cy="560" r="4" fill="#4a8ae8" stroke="#fff" stroke-width="1.300"/>
<circle cx="415" cy="561" r="8" fill="#7ab848"/><circle cx="415" cy="561" r="3" fill="none" stroke="#fff" stroke-width="1.500"/><path d="M421 553l3-2M422 556l3-1M419 552l1-2" stroke="#d06840" stroke-width="1.300"/>
<rect x="451" y="552" width="14" height="16" rx="1" fill="#3a7ad8"/><rect x="446" y="555" width="10" height="10" fill="#1a4a9c"/><text x="451" y="563" text-anchor="middle" style="fill:#fff;font-size:8px;font-weight:bold">W</text>
<path d="M487 565c0-6 6-12 12-12 4 0 5 3 3 5s1 4-2 7c-4 4-13 5-13 0z" fill="#c8d4dc"/><path d="M499 560l6-10 2 1-6 11z" fill="#d8a860"/><circle cx="492" cy="561" r="1.500" fill="#e05050"/><circle cx="495" cy="557" r="1.500" fill="#4a90d8"/>
<rect x="526" y="551" width="18" height="18" rx="5" fill="#4a8ef0"/><rect x="530" y="556.500" width="7" height="7" rx="1.500" fill="#fff"/><path d="M538 559l3-2v6l-3-2z" fill="#fff"/>
<rect x="617.500" y="553" width="39" height="16" fill="url(#nn)" stroke="#b8c8d4"/>
<path d="M657 556h1.500M657 566h1.500" stroke="#eee"/>
<text x="621" y="565" style="fill:#fff;font-size:12px" textLength="32" lengthAdjust="spacingAndGlyphs">94.0%</text>
<path d="M792.500 554.500h16l2 2v10h-18zM795 558h6v6h-6zM802 558h6M802 561h6M802 564h6" fill="none" stroke="#ddd" stroke-width="1"/>
<path d="M825.500 564l4.500-4.500 4.500 4.500" fill="none" stroke="#ccc"/>
<rect x="844" y="557" width="11" height="7" fill="#eee"/><rect x="843" y="565" width="13" height="1" fill="#eee"/><path d="M845 553l2 2" stroke="#eee"/>
<path d="M864 566c1-4 5-8 9-8M867 566c1-2 3-5 6-5M870 566c.5-1 2-2 3-2" fill="none" stroke="#888"/>
<path d="M882 558h3l4-3v12l-4-3h-3zM891 558c1 2 1 4 0 6M893 557c2 3 2 5 0 8" fill="none" stroke="#777"/>
<text x="903" y="565" style="fill:#ccc;font-size:10.500px" textLength="17" lengthAdjust="spacingAndGlyphs">ENG</text>
<text x="933" y="557" style="fill:#ddd;font-size:11px" textLength="40" lengthAdjust="spacingAndGlyphs">11:21 AM</text>
<text x="938" y="572" style="fill:#ddd;font-size:11px" textLength="35" lengthAdjust="spacingAndGlyphs">8/3/2021</text>
<path d="M991 554h13v11h-7l-3 3v-3h-3z" fill="#eee"/><path d="M993.500 557h8M993.500 559.500h8M993.500 562h5" stroke="#666"/>
<circle cx="1003.500" cy="566" r="5" fill="#2d2a28" stroke="#ccc"/><text x="1003.500" y="569" text-anchor="middle" style="fill:#fff;font-size:8px">1</text>
<rect x="1020" y="544" width="1" height="32" fill="#777"/>
</svg>
<div class="w"></div><div class="wi"></div><div class="sq"></div><div class="p"></div><div class="h"></div>
</body></html>
